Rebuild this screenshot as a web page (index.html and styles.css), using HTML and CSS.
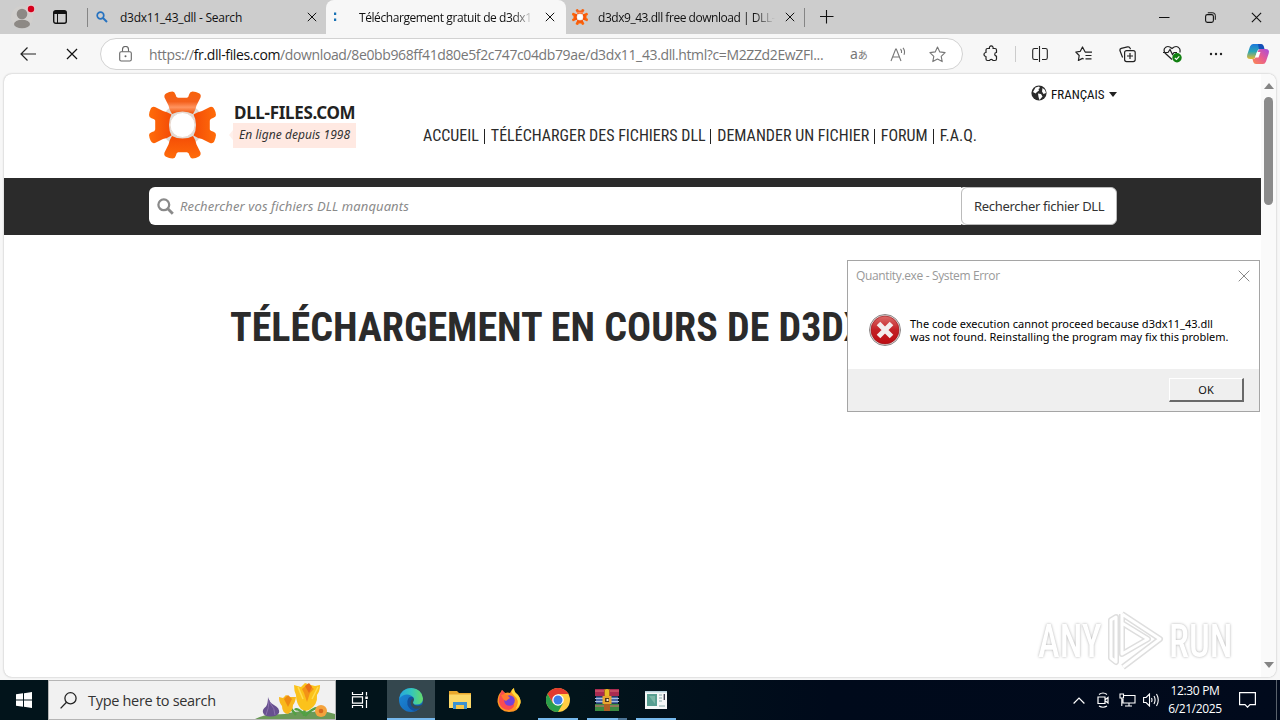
FILE: index.html
```html
<!DOCTYPE html>
<html lang="fr">
<head>
<meta charset="utf-8">
<title>Desktop</title>
<link rel="stylesheet" href="styles.css">
</head>
<body>
<svg width="0" height="0" class="defs">
  <defs>
    <linearGradient id="og" x1="0" y1="0" x2="0" y2="1"><stop offset="0" stop-color="#f8620a"/><stop offset=".45" stop-color="#f4601c"/><stop offset=".7" stop-color="#ff9460"/><stop offset="1" stop-color="#ee5208"/></linearGradient>
    <linearGradient id="og2" x1="0" y1="0" x2="0" y2="1"><stop offset="0" stop-color="#ff6c0a"/><stop offset="1" stop-color="#f44c06"/></linearGradient>
    <path id="lobe" d="M17.500 1.800Q20 .3 23.500 0Q25.500 0 26.500 3Q27 6 29 6.200H38Q39.500 6 40.300 2.500Q41 0 43.500 0Q47 .3 50 1.800Q52.500 3 51.500 6L47.500 14Q46.500 19 44 22.500Q39.500 20 33.500 20Q27.500 20 23 22.500Q20.500 19 19.500 14L15.500 6Q14.800 3 17.500 1.800Z"/>
    <symbol id="gear" viewBox="0 0 67 67">
      <circle cx="33.500" cy="33.500" r="16.500" fill="none" stroke="#dedad6" stroke-width="10"/>
      <use href="#lobe" fill="url(#og2)" transform="rotate(90 33.500 33.500)"/>
      <use href="#lobe" fill="url(#og2)" transform="rotate(270 33.500 33.500)"/>
      <use href="#lobe" fill="url(#og2)" transform="rotate(180 33.500 33.500)"/>
      <use href="#lobe" fill="url(#og)"/>
      <circle cx="33.500" cy="33.500" r="12.500" fill="#fff" stroke="#e9d9cf"/>
    </symbol>
    <symbol id="x" viewBox="0 0 10 10"><path d="M.8.8l8.400 8.400M9.200.8L.8 9.200" fill="none" stroke="currentColor" stroke-width="1"/></symbol>
  </defs>
</svg>

<div class="tabs">
  <svg class="avatar" width="24" height="26" viewBox="0 0 24 26"><circle cx="11" cy="13" r="11" fill="#d1cfcd"/><circle cx="11" cy="10" r="5.300" fill="#8d8985"/><ellipse cx="11" cy="20" rx="8" ry="4.300" fill="#8d8985"/><circle cx="20" cy="5" r="4.500" fill="#e8c6ca"/><circle cx="20" cy="5" r="3.200" fill="#d5001c"/></svg>
  <svg class="workspace" width="14" height="14" viewBox="0 0 14 14"><rect x=".7" y=".7" width="12.600" height="12.600" rx="2" fill="none" stroke="#111" stroke-width="1.400"/><path d="M1 1h12v3H1z" fill="#111"/><path d="M4.500 4v9" stroke="#111" stroke-width="1"/></svg>
  <i class="vsep"></i>
  <div class="tab first">
    <svg class="fav" width="12" height="12" viewBox="0 0 12 12"><circle cx="4.500" cy="4.500" r="3.300" fill="none" stroke="#2672c0" stroke-width="1.700"/><path d="M7 7l4 4" stroke="#2672c0" stroke-width="2"/></svg>
    <span class="label l1">d3dx11_43_dll - Search</span>
    <svg class="cx" width="10" height="10"><use href="#x"/></svg>
  </div>
  <div class="tab active">
    <svg class="fav" width="14" height="12" viewBox="0 0 14 12"><path d="M2 1.500h2.200v2.500H2zM2 7.500h2.200V10H2z" fill="#1771b4"/></svg>
    <span class="label l2">Téléchargement gratuit de d3dx1</span>
    <svg class="cx" width="10" height="10"><use href="#x"/></svg>
  </div>
  <div class="tab last">
    <svg class="fav" width="16" height="16"><use href="#gear"/></svg>
    <span class="label l3">d3dx9_43.dll free download | DLL-</span>
    <svg class="cx" width="10" height="10"><use href="#x"/></svg>
  </div>
  <i class="vsep"></i>
  <svg class="plus" width="14" height="14" viewBox="0 0 14 14"><path d="M6.500 0v13.500M0 6.500h13.500" stroke="#111" stroke-width="1.100"/></svg>
  <div class="wincontrols">
    <svg width="11" height="11" viewBox="0 0 11 11"><path d="M0 5.500h10.500" stroke="#111"/></svg>
    <svg width="11" height="11" viewBox="0 0 11 11"><rect x=".6" y="2.600" width="7.800" height="7.800" rx="1.800" fill="none" stroke="#111" stroke-width="1.100"/><path d="M2.800.8h5Q10.300.8 10.300 3.300v4.500" fill="none" stroke="#111"/></svg>
    <svg width="11" height="11"><use href="#x"/></svg>
  </div>
</div>

<div class="toolbar">
  <svg class="back" width="16" height="14" viewBox="0 0 16 14"><path d="M16 7H1M7.500.5L1 7l6.500 6.500" fill="none" stroke="#222" stroke-width="1.200"/></svg>
  <svg class="stop" width="12" height="12"><use href="#x"/></svg>
  <div class="omnibox">
    <svg class="lock" width="13" height="16" viewBox="0 0 13 16"><rect x=".7" y="5.700" width="11.600" height="9.300" rx="1.500" fill="none" stroke="#666" stroke-width="1.100"/><path d="M3.500 5.500V3.500a3 3 0 0 1 6 0v2" fill="none" stroke="#666" stroke-width="1.100"/><circle cx="6.500" cy="10.300" r="1" fill="#666"/></svg>
    <span class="url">https://<b>fr.dll-files.com</b>/download/8e0bb968ff41d80e5f2c747c04db79ae/d3dx11_43.dll.html?c=M2ZZd2EwZFI...</span>
    <span class="translate">a<small>あ</small></span>
    <svg class="read" width="17" height="15" viewBox="0 0 17 15"><path d="M1 14L5.700 2h.6L11 14M2.800 10h6.400M10.500 2q1.500 1.500 1 4M13 .8q2.500 3 1 7" fill="none" stroke="#777" stroke-width="1.100"/></svg>
    <svg class="star" width="17" height="17" viewBox="0 0 17 17"><path d="M8.500 1l2.300 4.900 5.300.7-3.900 3.700 1 5.300-4.700-2.600-4.700 2.600 1-5.300L.9 6.600l5.300-.7z" fill="none" stroke="#777" stroke-width="1.100" stroke-linejoin="round"/></svg>
  </div>
  <div class="tools">
    <svg class="t1" width="18" height="18" viewBox="0 0 18 18"><path d="M5.500 3.500H7.500a1.900 1.900 0 1 1 3.500 0h2q1.500 0 1.500 1.500v2.500a1.700 1.700 0 0 0 0 3.500v3q0 1.500-1.500 1.500h-2a1.900 1.900 0 0 0-3.500 0H5.500Q4 15.500 4 14v-2.500a2 2 0 1 1 0-4V5q0-1.500 1.500-1.500z" fill="none" stroke="#222" stroke-width="1.200" stroke-linejoin="round"/></svg>
    <i class="tsep"></i>
    <svg class="t2" width="16" height="16" viewBox="0 0 16 16"><path d="M6 2.500H2.500Q.7 2.500.7 4.300v7.400Q.7 13.500 2.500 13.500H6M10 2.500h3.500q1.800 0 1.800 1.800v7.400q0 1.800-1.800 1.800H10M7.500 0v16" fill="none" stroke="#222" stroke-width="1.100"/></svg>
    <svg class="t3" width="18" height="16" viewBox="0 0 18 16"><path d="M10 5.700L7.500 1 5.300 5.300.8 6l3.400 3.500-.8 5L7.500 12.400l1.200.7M9.800 6.200H17M10.500 9.500H16.500M10.500 12.800H16.500" fill="none" stroke="#222" stroke-width="1.200" stroke-linejoin="round"/></svg>
    <svg class="t4" width="17" height="17" viewBox="0 0 17 17"><rect x="5.600" y="4.600" width="10.600" height="11" rx="2" fill="none" stroke="#222" stroke-width="1.200"/><path d="M8 10h6M11 7v6M3.600 11.500L1 4.800Q.5 3 2.300 2.400L8.500.9q2-.5 2.700 1.500l.3.800" fill="none" stroke="#222" stroke-width="1.200"/></svg>
    <svg class="t5" width="20" height="18" viewBox="0 0 20 18"><path d="M9 14.500L2 8Q.5 5.500 1.500 3.500 4.500-.5 9 3.500q4.500-4 7.500 0 1 2 .3 4M0 7.500h5l2-3 2.500 5 1.500-2h3" fill="none" stroke="#222" stroke-width="1.200"/><circle cx="14" cy="12.700" r="4.700" fill="#118011"/><path d="M11.800 12.800l1.600 1.600 2.900-3" fill="none" stroke="#fff" stroke-width="1.100"/></svg>
    <svg class="t6" width="16" height="4" viewBox="0 0 16 4"><circle cx="3" cy="2" r="1.200" fill="#222"/><circle cx="8" cy="2" r="1.200" fill="#222"/><circle cx="13" cy="2" r="1.200" fill="#222"/></svg>
    <svg class="t7" width="24" height="22" viewBox="0 0 24 22">
      <defs><linearGradient id="c1" x1="0" y1="0" x2="0" y2="1"><stop offset="0" stop-color="#1c78dd"/><stop offset=".5" stop-color="#2ba6b5"/><stop offset="1" stop-color="#e7b92e"/></linearGradient><linearGradient id="c2" x1="1" y1="0" x2="0" y2="1"><stop offset="0" stop-color="#a64de0"/><stop offset=".5" stop-color="#e85c90"/><stop offset="1" stop-color="#fb8a50"/></linearGradient></defs>
      <path d="M7 1h7q2 0 2.700 2L17.500 6H14q-2 0-2.700 2L9 14.500Q8.500 16 6.500 16H4.500Q0 16 1.300 11.500L4 3.500Q5 1 7 1z" fill="url(#c1)"/><path d="M12 1h3q2 0 2.700 2l.8 3H14l-1 .5z" fill="#1450b8"/><path d="M17 21h-7q-2 0-2.700-2L6.500 16q2.500 0 3-1.500L12 8q.7-2 2.500-2h5Q24 6 22.700 10.500L20 18.500Q19 21 17 21z" fill="url(#c2)"/><path d="M11 9h3.500l-2 5.500H9z" fill="#fff"/>
    </svg>
  </div>
</div>

<div class="viewport">
  <div class="page">
    <header class="site">
      <svg class="logo" width="67" height="68"><use href="#gear"/></svg>
      <div class="brand">
        <div class="name"><span>DLL-FILES.COM</span></div>
        <div class="since"><span>En ligne depuis 1998</span></div>
      </div>
      <nav>
        <a class="n1"><span>ACCUEIL</span></a><a class="n2"><span>TÉLÉCHARGER DES FICHIERS DLL</span></a><a class="n3"><span>DEMANDER UN FICHIER</span></a><a class="n4"><span>FORUM</span></a><a class="n5"><span>F.A.Q.</span></a>
      </nav>
      <div class="lang">
        <svg width="16" height="16" viewBox="0 0 16 16"><circle cx="8" cy="8" r="7.600" fill="#2b2b2b"/><path d="M4.500 2.500L8 1.500l1 1.500-1.500 1 .5 1.500-2 1.500L4.500 8.500 2 7zM7 8.500l3 .5 1.500 2.500L8.500 15 7.500 12zM11.500 3l2.500 2 1 3-2.500 1-1.500-2.500z" fill="#fff"/></svg>
        <span class="lg">FRANÇAIS</span>
        <i class="caret"></i>
      </div>
    </header>
    <div class="searchbar">
      <div class="field">
        <svg width="17" height="17" viewBox="0 0 17 17"><circle cx="6.800" cy="6.800" r="5.400" fill="none" stroke="#8a8a8a" stroke-width="2.300"/><path d="M10.800 10.800l5 5" stroke="#8a8a8a" stroke-width="2.800"/></svg>
        <span class="ph">Rechercher vos fichiers DLL manquants</span>
      </div>
      <div class="btn"><span>Rechercher fichier DLL</span></div>
    </div>
    <h1><span>TÉLÉCHARGEMENT EN COURS DE D3DX11_43.DLL</span></h1>
  </div>
  <div class="scroll"><i class="up"></i><i class="thumb"></i><i class="down"></i></div>
</div>

<div class="taskbar">
  <div class="start"><svg width="16" height="16" viewBox="0 0 16 16"><path d="M0 2.300L7 1.300v6.200H0zM8 1.200L16 0v7.500H8zM0 8.500h7v6.200L0 13.700zM8 8.500h8V16l-8-1.200z" fill="#fff"/></svg></div>
  <div class="tsearch">
    <svg class="mag" width="17" height="17" viewBox="0 0 17 17"><circle cx="10.500" cy="6.300" r="5.600" fill="none" stroke="#222" stroke-width="1.300"/><path d="M6.500 10.300L.6 16.400" stroke="#222" stroke-width="1.300"/></svg>
    <span>Type here to search</span>
    <svg class="flowers" width="80" height="38" viewBox="0 0 80 38">
      <path d="M0 38Q9 33.500 20 33q8 1 14-1 10-3 22-1 13-2 24 2v5z" fill="#6b9a58"/>
      <path d="M51 15L49 35M34 25l7 9M50 34q-8-8-10-5M50 35q8-9 14-8" stroke="#52a044" stroke-width="2.500" fill="none"/>
      <path d="M13 16q1 5 6 8 6 3 5 8-3 4-9 3.500-6 0-7-4-1-3 3-6 2-3 2-9.500z" fill="#67508f"/><path d="M14 19q0 8-3 15M15 22q5 5 5 12" stroke="#8a70ad" fill="none"/>
      <path d="M24 16l4 1 3-3 4 2 6 0q-1 6-3 8 0 6-5 9-6-1-6-8-3-3-3-9z" fill="#f9b81b"/><path d="M29 18l4-4 4 4-4 8z" fill="#ee8a12"/>
      <path d="M39 4l7 2 4-4 6 2 4 1 5-1q0 6-3 10 1 10-8 15-4 2-8-1-5-6-5-14-2-4-2-10z" fill="#fbc21b"/><path d="M47 8l6-5 6 5-4 4-3 9-3-9z" fill="#f39316"/><path d="M43 6l5 12M63 6l-6 12" stroke="#ffdc4f" stroke-width="1.500"/><path d="M50 5l4-3 3 4-3 6z" fill="#e86d18"/>
      <circle cx="66" cy="30" r="6" fill="#f4a33d"/><circle cx="66" cy="30" r="2.300" fill="#d86a1c"/>
    </svg>
  </div>
  <div class="apps">
    <div class="app"><svg width="18" height="16" viewBox="0 0 18 16"><path d="M1.500 0v2.500h10V0M1.500 16v-2.500h10V16M1.500 4.800h10v6.400h-10zM15.500 0v3.500M15.500 8v8" fill="none" stroke="#fff" stroke-width="1.200"/><path d="M14.300 4.500h2.500V7h-2.500z" fill="#fff"/></svg></div>
    <div class="app on cur"><svg width="24" height="24" viewBox="0 0 24 24"><defs><linearGradient id="e1" x1="0" y1="0" x2="1" y2="0"><stop offset="0" stop-color="#27a6df"/><stop offset=".5" stop-color="#33c5bd"/><stop offset="1" stop-color="#66db68"/></linearGradient><linearGradient id="e2" x1="0" y1="0" x2="1" y2="1"><stop offset="0" stop-color="#1c8bd8"/><stop offset="1" stop-color="#1361b4"/></linearGradient></defs><circle cx="12" cy="12" r="12" fill="url(#e2)"/><path d="M.3 10.500Q2 0 12.500 0 23 1 24 10.500q0 6-6.500 6-4 0-3.500-2 1.700-2 .5-4.500-2-3.500-6.500-3.500T.3 10.500z" fill="url(#e1)"/><path d="M13.500 14.500q1 3 5 3 2 0 4-1l1 .5q-3 5-8 6-5-1-7-6-1-4 1-7 2-2 4.500-1 1.500 2-.5 5.500z" fill="#14509a"/><path d="M14 14.500q.5 3.500 5 3.500 3 0 5-2.500l-1.500 4q-4 2-7 1-4-2-4-6.500 1-3.500 3.500-3.500z" fill="#354b53"/></svg></div>
    <div class="app"><svg width="22" height="20" viewBox="0 0 22 20"><path d="M0 1h8l2 2h12v15H0z" fill="#e9a82c"/><path d="M0 4.500h22V18H0z" fill="#fcd868"/><path d="M4 19v-7h14v7h-3v-4H7v4z" fill="#3b91d1"/><path d="M7 15h8v4H7z" fill="#f5c64a"/></svg></div>
    <div class="app"><svg width="24" height="24" viewBox="0 0 24 24"><path d="M4 4l1-2 3 3q3-1 5 0Q14 2 17 0q0 4 3 6 4 4 3.500 9Q22 24 12 24 2 23.500.5 14 .5 7 4 4z" fill="#ff9422"/><path d="M4 4l1-2 3 3Q4 9 8 13q3 5 9 3 1 4-5 6Q4 22 2 14q0-6 2-10z" fill="#fb4b50"/><path d="M17 0q0 4 3 6 4 4 3.500 9-2 5-5 6 4-6 1-11-4-4-5-6 0-2.500 2.500-4z" fill="#ffdc3c"/><circle cx="12.500" cy="12.500" r="5.300" fill="#7542d8"/><path d="M4 7q5-2 7 1l2 2q-3 2-4 3-3-1-5-6z" fill="#ff7930"/></svg></div>
    <div class="app on short"><svg width="24" height="24" viewBox="0 0 24 24"><circle cx="12" cy="12" r="12" fill="#ffce44"/><path d="M1.600 6A12 12 0 0 1 22.400 6H12L6.800 15z" fill="#e33b2e"/><path d="M1.600 6A12 12 0 0 0 12 24l5.200-9-5.200 2-5.200-2z" fill="#2b9e4b"/><circle cx="12" cy="12" r="5.800" fill="#fff"/><circle cx="12" cy="12" r="4.500" fill="#3d7ee8"/></svg></div>
    <div class="app on short two"><svg width="24" height="22" viewBox="0 0 24 22"><path d="M0 0h24v7H0z" fill="#a92b50"/><path d="M1 7.500h22v7H1z" fill="#4767a6"/><path d="M0 15h24v7H0z" fill="#3c8a42"/><path d="M0 2h24M0 17h24" stroke="#df6a75" stroke-width="1.200"/><path d="M0 9.500h24M0 12.500h24" stroke="#a9bddb"/><path d="M9 0h6v22H9z" fill="#ad5f25"/><path d="M10 1q2-2 4 0v6h-4z" fill="#e6bb24"/><path d="M7.500 7h9v8h-9z" fill="#e6a52f"/><path d="M10 9h4v4h-4z" fill="#4d371e"/><path d="M11.500 10h2v2h-2z" fill="#f8eacc"/></svg></div>
    <div class="app on short"><svg width="22" height="18" viewBox="0 0 22 18"><path d="M0 0h22v18H0z" fill="#f5f7f7"/><path d="M0 0h22v1.500H0z" fill="#b9d2dd"/><path d="M2 3h10v12H2z" fill="#579e91"/><path d="M4 5l6 8V5z" fill="#7bb6a6"/><path d="M14 4h3M14 7h3M14 10h3M14 15h6" stroke="#8aa"/><path d="M19.300 3v6" stroke="#334" stroke-width="1.300"/></svg></div>
  </div>
  <div class="tray">
    <svg class="chev" width="12" height="7" viewBox="0 0 12 7"><path d="M.6 6.500L6 1l5.400 5.500" fill="none" stroke="#fff" stroke-width="1.200"/></svg>
    <svg class="cam" width="12" height="16" viewBox="0 0 12 16"><path d="M1 5h7v6.500H1zM8.500 7.500l2.500-2v5.500l-2.500-2M2 2.500q4-3 8 0M2 14q4 2.500 8 0" fill="none" stroke="#fff" stroke-width="1.200"/></svg>
    <svg class="net" width="17" height="14" viewBox="0 0 17 14"><path d="M5 2.500h11v7.500H4V6M10 10v3M6 13h7M1 1h3.500v4H1zM2.800 5v8" fill="none" stroke="#fff" stroke-width="1.100"/></svg>
    <svg class="vol" width="17" height="14" viewBox="0 0 17 14"><path d="M.6 4.500h2.500L6.500 1v12L3.100 9.500H.6zM8.500 5q1 2 0 4M11 3q2.200 4 0 8M13.500 1q3.500 6 0 12" fill="none" stroke="#fff" stroke-width="1.100"/></svg>
    <div class="clock"><span>12:30 PM</span><span class="date">6/21/2025</span></div>
    <svg class="note" width="17" height="16" viewBox="0 0 17 16"><path d="M.6.600h15.800v12H11L8.500 15.200 6 12.600H.6z" fill="none" stroke="#fff" stroke-width="1.200"/></svg>
    <i class="peek"></i>
  </div>
</div>

<div class="watermark">
  <span class="any">ANY</span>
  <svg width="58" height="64" viewBox="0 0 58 64"><g fill="none" stroke-linejoin="round"><path d="M16 5L54 30 17 58M16 5v40L42 30 16 14M5 11v38l5 4V8z" stroke="#dedede" stroke-width="6"/><path d="M16 5L54 30 17 58M16 5v40L42 30 16 14M5 11v38l5 4V8z" stroke="#fff" stroke-width="3"/></g></svg>
  <span class="run">RUN</span>
</div>

<div class="dialog">
  <div class="dtitle"><span>Quantity.exe - System Error</span><svg width="12" height="12" viewBox="0 0 12 12"><path d="M.7.7l10.600 10.600M11.300.7L.7 11.300" stroke="#888"/></svg></div>
  <div class="dbody">
    <svg width="32" height="32" viewBox="0 0 32 32"><defs><linearGradient id="rd" x1="0" y1="0" x2="0" y2="1"><stop offset="0" stop-color="#dc6b69"/><stop offset=".5" stop-color="#c32025"/><stop offset="1" stop-color="#bd0b12"/></linearGradient></defs><circle cx="16" cy="16" r="15.500" fill="#e8e0e0" stroke="#8c8585"/><circle cx="16" cy="16" r="14" fill="url(#rd)" stroke="#981016" stroke-width=".6"/><path d="M9.500 9.500l13 13M22.500 9.500l-13 13" stroke="#f3eded" stroke-width="5"/></svg>
    <p><span class="d1">The code execution cannot proceed because d3dx11_43.dll</span><span class="d2">was not found. Reinstalling the program may fix this problem.</span></p>
  </div>
  <div class="dfoot"><div class="ok">OK</div></div>
</div>
</body>
</html>
```
FILE: styles.css
```css
* { box-sizing: border-box; }
body { margin: 0; width: 1280px; height: 720px; overflow: hidden; position: relative; display: flex; flex-direction: column; background: #f7f7f7; font-family: "Open Sans", "Noto Sans", sans-serif; color: #111; }
svg { display: block; flex: none; }
.defs { position: absolute; }
i { display: block; flex: none; }
span { white-space: nowrap; }

.tabs { flex: none; height: 34px; background: #cdcdcd; display: flex; align-items: center; }
.avatar { margin: 0 0 0 11px; }
.workspace { margin-left: 18px; }
.vsep { width: 1px; height: 19px; background: #858585; }
.workspace + .vsep { margin-left: 20px; }
.tab { display: flex; align-items: center; height: 34px; flex: none; }
.tab.first { width: 238px; padding-left: 8px; }
.tab.active { width: 240px; background: #f7f7f7; border-radius: 8px 8px 0 0; padding-left: 6px; }
.tab.last { width: 238px; padding-left: 6px; }
.label { font-size: 12px; flex: none; }
.l1 { width: 179px; margin-left: 12px; letter-spacing: -.24px; }
.l2 { width: 175px; margin-left: 13px; letter-spacing: -.42px; -webkit-mask-image: linear-gradient(90deg, #000 88%, transparent); mask-image: linear-gradient(90deg, #000 88%, transparent); }
.l3 { width: 177px; margin-left: 10px; letter-spacing: -.46px; -webkit-mask-image: linear-gradient(90deg, #000 88%, transparent); mask-image: linear-gradient(90deg, #000 88%, transparent); }
.cx { margin-left: 10px; }
.first .cx { margin-left: 8px; }
.active .cx { margin-left: 11px; }
.plus { margin-left: 15px; }
.wincontrols { display: flex; gap: 35px; margin-left: auto; padding-right: 18px; }

.toolbar { flex: none; height: 40px; display: flex; align-items: center; padding-left: 20px; }
.stop { margin-left: 30px; }
.omnibox { margin-left: 22px; width: 863px; height: 32px; border: 1px solid #d2d2d2; border-radius: 16px; background: #fff; display: flex; align-items: center; padding-left: 18px; }
.url { font-size: 14px; margin-left: 17px; width: 701px; color: #777; letter-spacing: -.375px; }
.url b { font-weight: 400; color: #111; }
.translate { font-size: 14px; line-height: 16px; width: 19px; color: #777; font-family: "Noto Sans", "Noto Sans CJK JP", sans-serif; }
.translate small { font-size: 10px; font-family: "Noto Sans CJK JP", sans-serif; }
.read { margin-left: 21px; }
.star { margin-left: 22px; }
.tools { display: flex; align-items: center; }
.t1 { margin-left: 19px; }
.tsep { width: 1px; height: 16px; background: #ccc; margin-left: 15px; }
.t2 { margin-left: 16px; }
.t3 { margin-left: 27px; }
.t4 { margin-left: 26px; }
.t5 { margin-left: 27px; }
.t6 { margin-left: 25px; }
.t7 { margin-left: 22px; }

.viewport { flex: none; width: 1272px; height: 603px; margin: 0 4px; background: #fff; border-radius: 8px; box-shadow: 0 0 2px #aaa; display: flex; overflow: hidden; }
.page { width: 1257px; }
.scroll { width: 15px; background: #fafafa; display: flex; flex-direction: column; align-items: center; padding: 9px 0; }
.up { border: 5px solid transparent; border-top: 0; border-bottom: 6px solid #858585; }
.thumb { width: 9px; height: 108px; margin-top: 8px; border-radius: 5px; background: #8b8b8b; }
.down { border: 5px solid transparent; border-bottom: 0; border-top: 6px solid #858585; margin-top: auto; }
.site { height: 104px; padding: 0 144px 0 145px; display: flex; }
.logo { margin-top: 17px; }
.brand { margin: 28px 0 0 17px; width: 123px; }
.btn span { display: inline-block; }
.name { height: 21px; font: 700 17px/22px "Noto Sans", sans-serif; color: #222; padding-left: 1px; letter-spacing: -.3px; }
.since { position: relative; height: 25px; padding-left: 6px; background: #ffe9e2; font: italic 12px/24px "Noto Sans", sans-serif; color: #333; letter-spacing: .05px; }
.since::before { content: ""; position: absolute; left: -4px; top: 7px; border: 5px solid transparent; border-left: 0; border-right: 4px solid #fff0eb; }
nav { display: flex; width: 554px; margin: 50px 0 0 67px; height: 23px; font: 400 16px/23px "Roboto Condensed", Roboto, sans-serif; font-stretch: 75%; color: #2b2b2b; }
nav a { display: flex; }
nav a + a::before { content: ""; display: block; width: 1px; height: 15px; background: #222; margin: 5px 6px 0 0; }
.n1 { width: 61px; }
.n2 { width: 227px; }
.n3 { width: 164px; letter-spacing: .03px; }
.n4 { width: 59px; }
.lang { display: flex; margin: 11px 0 0 auto; height: 18px; align-items: center; width: 86px; }
.lang svg { margin-top: -2px; }
.lg { font: 400 13px/18px "Roboto Condensed", Roboto, sans-serif; font-stretch: 75%; width: 55px; margin: 2px 0 0 4px; }
.caret { border: 4px solid transparent; border-top: 5px solid #222; border-bottom: 0; margin: 1px 0 0 3px; }
.searchbar { height: 57px; background: #2b2b2b; padding: 9px 144px 10px 145px; display: flex; }
.field { flex: 1; background: #fff; border-radius: 6px 0 0 6px; display: flex; align-items: center; padding-left: 8px; }
.ph { margin-left: 6px; font: italic 13px "Noto Sans", sans-serif; color: #8a8a8a; letter-spacing: .1px; }
.btn { width: 156px; border: 1px solid #bbb; border-radius: 6px; background: #fff; padding-left: 12px; font: 13px/36px "Noto Sans", sans-serif; color: #333; letter-spacing: -.31px; box-shadow: -3px 0 #fff; }
h1 { margin: 66px 0 0 226px; font: 700 40px/54px "Roboto Condensed", Roboto, sans-serif; font-stretch: 75%; color: #2b2b2b; letter-spacing: .02px; }

.taskbar { flex: none; height: 40px; margin-top: 3px; background: linear-gradient(90deg, #02141b 0, #02141b 45%, #000a1b 65%, #010a1c); display: flex; color: #fff; }
.start { width: 48px; display: flex; align-items: center; justify-content: center; }
.tsearch { width: 288px; background: #f1f1f1; border: 1px solid #b5b5b5; display: flex; align-items: center; color: #333; padding-left: 11px; }
.tsearch span { font-size: 14.5px; margin-left: 11px; width: 168px; letter-spacing: -.3px; }
.apps { display: flex; gap: 1px; }
.app { width: 48px; height: 40px; display: flex; align-items: center; justify-content: center; position: relative; }
.cur { margin-left: 2px; background: #34474e; }
.app.on::after { content: ""; position: absolute; left: 0; right: 0; bottom: 0; height: 2px; background: #76b9ed; }
.app.short::after { left: 4px; right: 4px; }
.app.two::before { content: ""; position: absolute; right: 4px; bottom: 0; width: 9px; height: 2px; background: #4d7597; z-index: 1; }
.tray { margin-left: auto; display: flex; align-items: center; }
.cam { margin-left: 12px; }
.net { margin-left: 10px; }
.vol { margin-left: 7px; }
.clock { width: 70px; display: flex; flex-direction: column; align-items: center; font-size: 12px; line-height: 18px; letter-spacing: -.35px; }
.note { margin-left: 9px; }
.peek { width: 1px; height: 40px; background: #59616b; margin: 0 3px 0 20px; }

.watermark { position: absolute; left: 1038px; top: 608px; display: flex; align-items: center; font: 500 46px/66px Roboto, sans-serif; font-stretch: 75%; color: #fff; text-shadow: 0 0 3px #aaa; }
.watermark span { display: block; transform-origin: 0 50%; }
.any { width: 68px; transform: scaleX(.8); }
.run { width: 64px; margin-left: 5px; transform: scaleX(.8); }

.dialog { position: absolute; left: 847px; top: 260px; width: 413px; height: 152px; border: 1px solid #a5a5a5; background: #fff; display: flex; flex-direction: column; }
.dtitle { height: 29px; display: flex; align-items: center; justify-content: space-between; padding: 0 9px 0 8px; font-size: 12px; color: #999; letter-spacing: -.36px; }
.dbody { height: 79px; display: flex; padding: 24px 0 0 21px; }
.dbody p { margin: 3px 0 0 9px; font: 11px/13px "Noto Sans", sans-serif; color: #000; }
.dbody p span { display: block; height: 13px; }
.d2 { letter-spacing: -.02px; }
.dfoot { flex: 1; background: #efefef; display: flex; justify-content: flex-end; padding: 9px 15px 0 0; }
.ok { width: 75px; height: 24px; border: 1px solid #fff; border-right: 2px solid #696969; border-bottom: 2px solid #696969; text-align: center; font: 11px/22px "Noto Sans", sans-serif; }
```
